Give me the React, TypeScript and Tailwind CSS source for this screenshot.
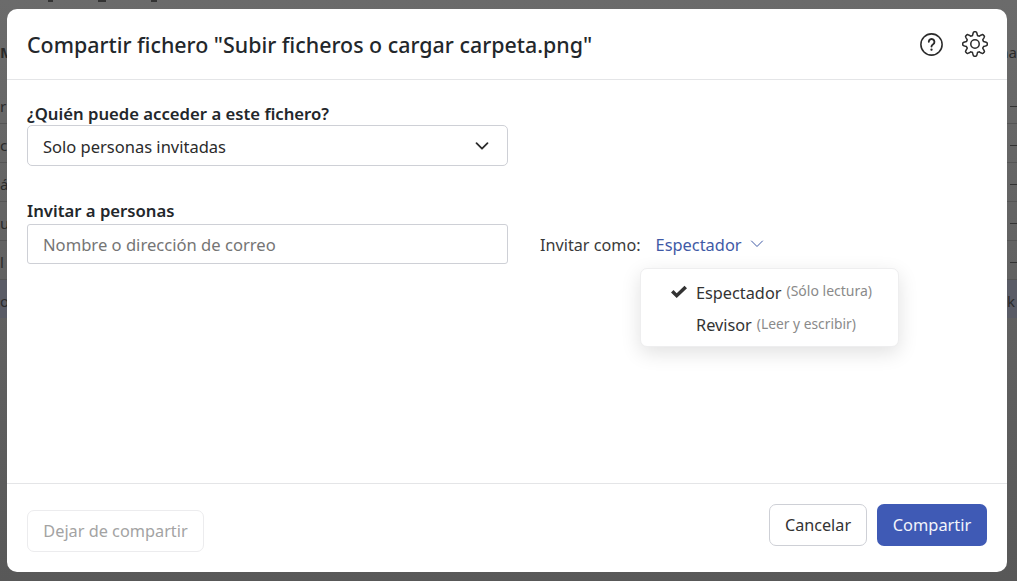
import React from "react";

const font = { fontFamily: '"Noto Sans", "Open Sans", sans-serif' };

function gearPath() {
  const pts: string[] = [];
  const n = 160;
  for (let i = 0; i < n; i++) {
    const t = (i / n) * Math.PI * 2;
    const c = Math.max(-1, Math.min(1, 1.5 * Math.cos(8 * t)));
    const r = 9.7 + 1.6 * c;
    const x = 12 + r * Math.sin(t);
    const y = 12 - r * Math.cos(t);
    pts.push(`${x.toFixed(2)} ${y.toFixed(2)}`);
  }
  return "M" + pts.join("L") + "Z";
}

function Backdrop() {
  const rows = ["r", "c", "á", "u", "l"];
  return (
    <div className="absolute inset-0 overflow-hidden bg-gradient-to-b from-[#6b6b6b] to-[#585858] text-[15px] text-[#2a2a2a]">
      <div className="flex h-[3px] gap-[45px] pl-[48px]">
        <span className="h-[2px] w-[5px] bg-[#333]"></span>
        <span className="h-[2px] w-[8px] bg-[#333]"></span>
        <span className="h-[2px] w-[6px] bg-[#333]"></span>
      </div>
      <div className="flex h-[82px] items-end justify-between pb-[22px] font-bold">
        <span>M</span>
        <span className="font-normal">na</span>
      </div>
      {rows.map((r, i) => (
        <div key={i} className="flex h-[39px] items-center justify-between border-b border-[#555555] pt-[5px]">
          <span>{r}</span>
          <span className="h-px w-[7px] bg-[#333]"></span>
        </div>
      ))}
      <div className="flex h-[38px] items-center justify-between bg-[#5a5c66] pt-[4px]">
        <span>o</span>
        <span className="pr-[2px]">k</span>
      </div>
    </div>
  );
}

export default function App() {
  return (
    <div className="relative h-[581px] w-[1017px] overflow-hidden" style={font}>
      <Backdrop />
      <div className="relative flex h-full items-start pl-[7px] pt-[9px]">
        <div className="flex h-[563px] w-[1000px] flex-col rounded-[10px] bg-white text-[#2b2b2b]">
          <header className="flex h-[71px] shrink-0 items-center justify-between border-b border-[#e4e5e7] pl-5 pr-[19px]">
            <h1 className="pt-[1px] text-[21.4px] font-medium leading-none text-[#23272b]">
              Compartir fichero "Subir ficheros o cargar carpeta.png"
            </h1>
            <div className="flex items-center gap-[18px]">
              <svg width="25" height="25" viewBox="0 0 24 24" fill="none" stroke="#2b2b2b" strokeWidth="1.5" strokeLinecap="round">
                <circle cx="12" cy="12" r="10.2" />
                <path d="M9.4 9.4a2.7 2.7 0 1 1 4.2 2.3c-1 .7-1.6 1.2-1.6 2.3" strokeWidth="1.8" />
                <circle cx="12" cy="17" r="0.6" fill="#2b2b2b" strokeWidth="1" />
              </svg>
              <svg width="26" height="26" viewBox="0 0 24 24" fill="none" stroke="#2b2b2b" strokeWidth="1.4" strokeLinecap="round" strokeLinejoin="round">
                <path d={gearPath()} />
                <circle cx="12" cy="12" r="3.900" />
              </svg>
            </div>
          </header>

          <main className="flex-1 px-5 pt-[22px]">
            <label className="block text-[16.7px] font-semibold leading-[23px] text-[#23272b]">¿Quién puede acceder a este fichero?</label>
            <div className="flex h-[41px] w-[481px] items-center justify-between rounded-[5px] border border-[#ced0d6] pl-[15px] pr-[17px] text-[16.5px]">
              <span className="pt-[3px]">Solo personas invitadas</span>
              <svg width="16" height="16" viewBox="0 0 16 16" fill="none" stroke="#2b2b2b" strokeWidth="1.8" strokeLinecap="round" strokeLinejoin="round">
                <path d="M2.500 5.200 8 10.700l5.500-5.500" />
              </svg>
            </div>

            <label className="mt-[32px] block text-[16.7px] font-semibold leading-[26px] text-[#23272b]">Invitar a personas</label>
            <div className="flex items-center">
              <div className="flex h-[40px] w-[481px] items-center rounded-[3px] border border-[#ced0d6] pl-[15px] text-[16.6px] text-[#757575]">
                <span className="pt-[2px]">Nombre o dirección de correo</span>
              </div>
              <span className="ml-8 pt-[2px] text-[16.2px] text-[#3a3a3a]">Invitar como:</span>
              <span className="ml-[15px] pt-[2px] text-[16.4px] text-[#3f5aa6]">Espectador</span>
              <svg className="ml-[8px]" width="14" height="14" viewBox="0 0 14 14" fill="none" stroke="#3f5aa6" strokeWidth="1" strokeLinecap="round" strokeLinejoin="round">
                <path d="M1.500 4 7 9.500 12.500 4" />
              </svg>
            </div>
            <div className="ml-[613px] mt-[4px] flex h-[79px] w-[259px] flex-col justify-center rounded-[7px] border border-[#eeeeef] bg-white pl-[29px] shadow-[0_6px_20px_rgba(0,0,0,0.12)]">
              <div className="relative flex items-start gap-[5px]">
                <svg className="absolute left-0 top-[9px]" width="18" height="14" viewBox="0 0 18 14" fill="#333">
                  <path d="M1 7.500 3.500 5l3.200 3.200L14.500.8 17 3.300 6.700 13z" />
                </svg>
                <span className="pl-[26px] pt-[3px] text-[16.3px] leading-[29px] text-[#333]">Espectador</span>
                <span className="text-[14px] leading-[29px] text-[#8a8a8a]">(Sólo lectura)</span>
              </div>
              <div className="mt-[1px] flex items-start gap-[5px] pl-[26px]">
                <span className="pt-[2px] text-[16.3px] leading-[29px] text-[#333]">Revisor</span>
                <span className="text-[13.800px] leading-[29px] text-[#8a8a8a]">(Leer y escribir)</span>
              </div>
            </div>
          </main>

          <footer className="flex h-[89px] shrink-0 items-start justify-between border-t border-[#e4e5e7] px-5 pt-[20px]">
            <button className="mt-[6px] h-[42px] w-[177px] rounded-[7px] border border-[#ececee] pt-[1px] text-[16.3px] text-[#a3a3a3]">Dejar de compartir</button>
            <div className="flex gap-[10px]">
              <button className="h-[42px] w-[98px] rounded-[7px] border border-[#ced0d6] text-[16.2px] text-[#333]">Cancelar</button>
              <button className="h-[42px] w-[110px] rounded-[7px] bg-[#3f5ab5] text-[16.4px] text-[#f2f4fb]">Compartir</button>
            </div>
          </footer>
        </div>
      </div>
    </div>
  );
}
